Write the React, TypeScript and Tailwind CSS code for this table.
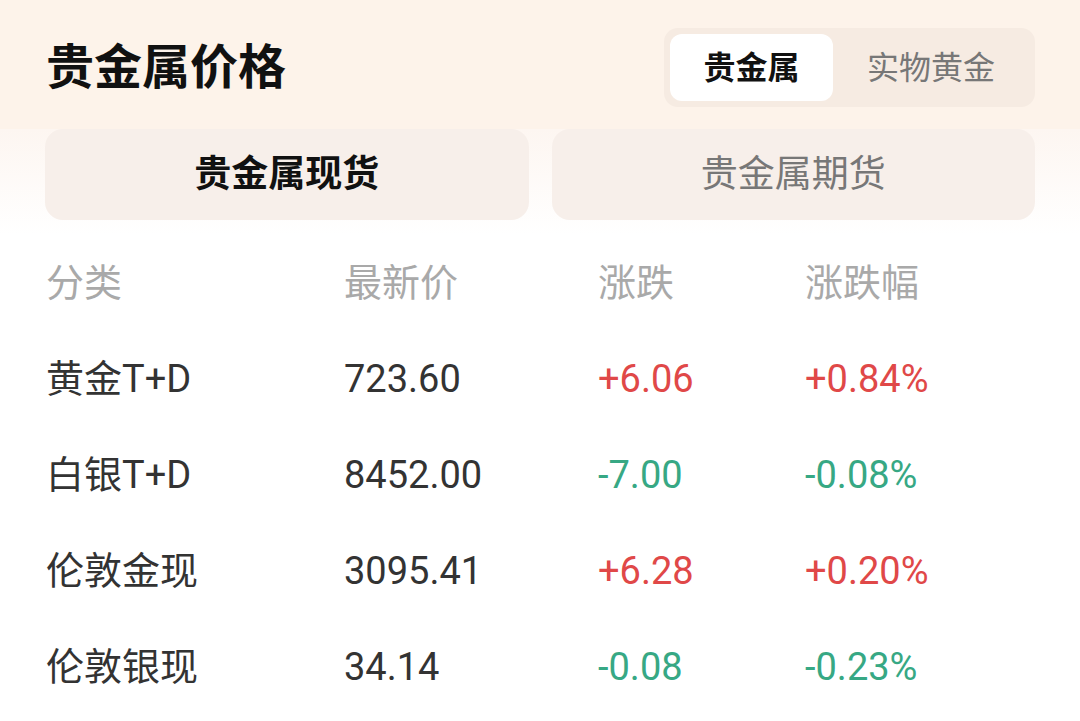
const font = { fontFamily: "Roboto, 'Noto Sans CJK SC', sans-serif" };

type Row = { name: string; price: string; change: string; pct: string };

const rows: Row[] = [
  { name: "黄金T+D", price: "723.60", change: "+6.06", pct: "+0.84%" },
  { name: "白银T+D", price: "8452.00", change: "-7.00", pct: "-0.08%" },
  { name: "伦敦金现", price: "3095.41", change: "+6.28", pct: "+0.20%" },
  { name: "伦敦银现", price: "34.14", change: "-0.08", pct: "-0.23%" },
];

function Cells({ cells, color }: { cells: string[]; color?: string }) {
  return (
    <div className="grid grid-cols-[298px_254px_207px_1fr] h-[96px] items-center pl-[46px]">
      {cells.map((c, i) => (
        <div
          key={i}
          className={
            color
              ? i < 2
                ? "text-[#333333]"
                : color
              : "text-[#a9a9a9]"
          }
        >
          {c}
        </div>
      ))}
    </div>
  );
}

export default function App() {
  return (
    <div className="w-[1080px] h-[721px] bg-white overflow-hidden" style={font}>
      <div className="bg-[#fdf3ea] h-[129px] flex items-start justify-between pl-[46px] pr-[45px] pt-[28px]">
        <h1 className="text-[48px] font-bold leading-[79px] text-[#111111]">贵金属价格</h1>
        <div className="flex bg-[#f6ebe2] rounded-[14px] p-[6px] h-[79px]">
          <div className="w-[163px] bg-white rounded-[12px] flex items-center justify-center text-[32px] font-bold text-[#111111]">
            贵金属
          </div>
          <div className="w-[196px] flex items-center justify-center text-[32px] text-[#777777]">
            实物黄金
          </div>
        </div>
      </div>
      <div className="bg-gradient-to-b from-[#fdf6f1] to-white px-[45px] pb-[15px]">
        <div className="flex gap-[23px] h-[91px]">
          <div className="flex-1 bg-[#f7efea] rounded-[18px] flex items-center justify-center text-[37px] font-bold text-[#111111]">
            贵金属现货
          </div>
          <div className="flex-1 bg-[#f7efea] rounded-[18px] flex items-center justify-center text-[37px] text-[#777777]">
            贵金属期货
          </div>
        </div>
      </div>
      <div className="text-[38px]">
        <Cells cells={["分类", "最新价", "涨跌", "涨跌幅"]} />
        {rows.map((r) => (
          <Cells
            key={r.name}
            cells={[r.name, r.price, r.change, r.pct]}
            color={r.change.startsWith("+") ? "text-[#e04848]" : "text-[#37a884]"}
          />
        ))}
      </div>
    </div>
  );
}
